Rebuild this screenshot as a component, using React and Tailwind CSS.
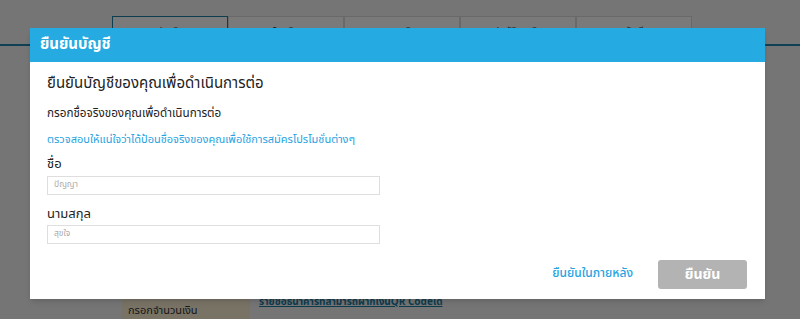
import React from 'react';

const FONT = { fontFamily: '"Noto Sans Thai", "Noto Sans", Tahoma, "DejaVu Sans", sans-serif' };

const tabs = ['ฝากเงิน', 'โอนเงิน', 'ถอนเงิน', 'ประวัติการเงิน', 'บัญชี'];

export default function App() {
  return (
    <div className="relative w-[800px] h-[319px] overflow-hidden bg-[#f4f4f4]" style={FONT}>
      {/* Page behind the dialog */}
      <div className="pt-4">
        <div className="flex ml-[112px]">
          {tabs.map((t, i) => (
            <div
              key={t}
              className={`w-[116px] h-[40px] flex justify-center pt-2 text-[9px] text-[#333] bg-white border ${
                i === 0 ? 'border-[#1f7fa6]' : 'border-[#dcdcdc]'
              }`}
            >
              {t}
            </div>
          ))}
        </div>
        <div className="h-[2px] bg-[#2186b0] -mt-[12px]" />
        <div className="flex mt-[250px] ml-[122px] gap-[9px]">
          <div className="w-[128px] h-[40px] bg-[#fdf1d6] px-[6px] pt-[7px] text-[11px] text-[#333]">กรอกจำนวนเงิน</div>
          <div className="text-[10px] text-[#1d7ea6] underline font-bold leading-none pt-[1px]">
            รายชื่อธนาคารที่สามารถฝากเงินQR Codeได้
          </div>
        </div>
      </div>

      {/* Overlay */}
      <div className="absolute inset-0 bg-black/[0.52]" />

      {/* Dialog */}
      <div className="absolute left-[30px] top-[28px] w-[735px] h-[271px] bg-white shadow-md">
        <div className="h-[34px] bg-[#25aae1] flex items-center pl-[10px]">
          <span className="text-white font-bold text-[15px]">ยืนยันบัญชี</span>
        </div>
        <div className="px-[17px] pt-[10px]">
          <div className="text-[15px] text-[#222] leading-[24px]">ยืนยันบัญชีของคุณเพื่อดำเนินการต่อ</div>
          <div className="mt-[9px] text-[11.7px] text-[#222] leading-[18px]">กรอกชื่อจริงของคุณเพื่อดำเนินการต่อ</div>
          <div className="mt-[9px] text-[11px] text-[#26a3df] leading-[16px]">
            ตรวจสอบให้แน่ใจว่าได้ป้อนชื่อจริงของคุณเพื่อใช้การสมัครโปรโมชั่นต่างๆ
          </div>
          <div className="mt-[7px] text-[13px] text-[#222] leading-[18px]">ชื่อ</div>
          <div className="mt-[3px] w-[333px] h-[19px] border border-[#dedede] flex items-center px-[6px] text-[8.5px] text-[#aaa]">
            ปัญญา
          </div>
          <div className="mt-[10px] text-[13px] text-[#222] leading-[18px]">นามสกุล</div>
          <div className="mt-[2px] w-[333px] h-[19px] border border-[#dedede] flex items-center px-[6px] text-[8.5px] text-[#aaa]">
            สุขใจ
          </div>
          <div className="flex justify-end items-center mt-[16px] pr-[1px]">
            <span className="text-[12px] text-[#26a3df] font-medium mr-[25px] -mt-[4px]">ยืนยันในภายหลัง</span>
            <div className="w-[89px] h-[29px] rounded-[3px] bg-[#b3b3b3] flex items-center justify-center text-white font-bold text-[14px]">
              ยืนยัน
            </div>
          </div>
        </div>
      </div>
    </div>
  );
}
